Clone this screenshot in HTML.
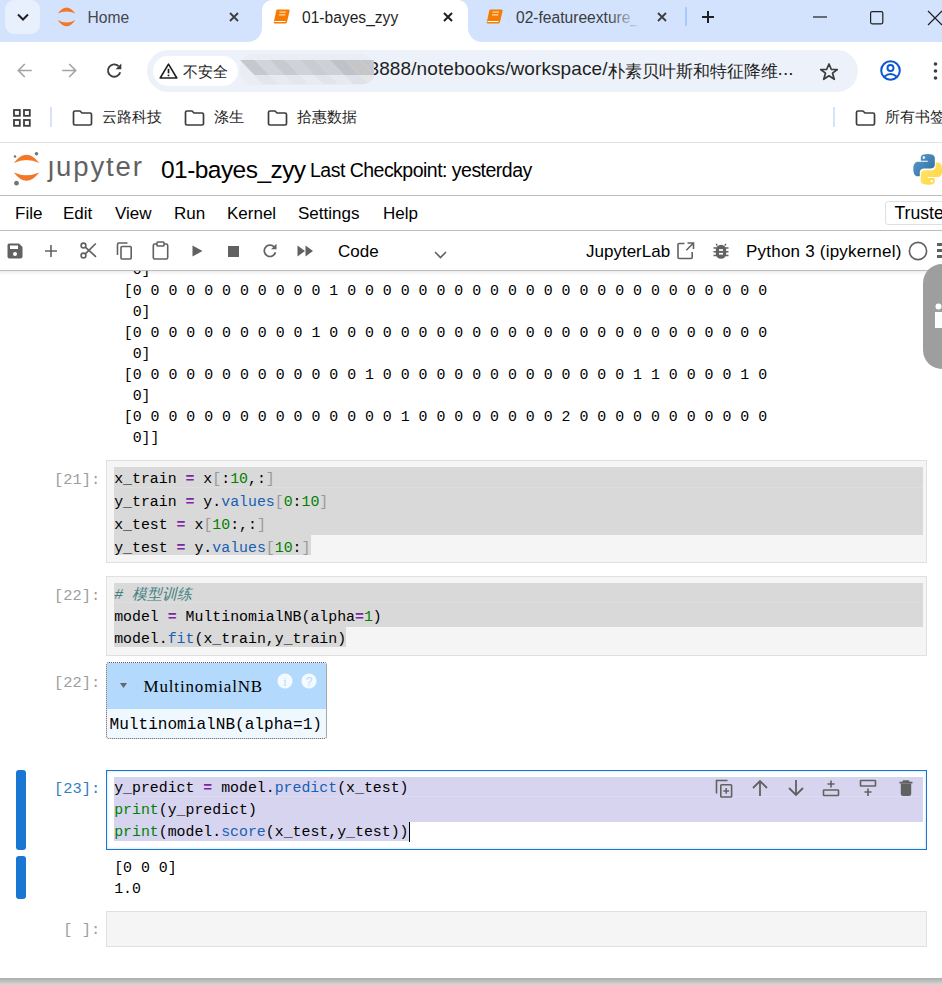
<!DOCTYPE html>
<html><head><meta charset="utf-8">
<style>
*{margin:0;padding:0;box-sizing:border-box}
html,body{width:942px;height:985px;overflow:hidden;background:#fff;font-family:"Liberation Sans",sans-serif;color:#1f1f1f}
.a{position:absolute}
svg{position:absolute;overflow:visible}
#tabs{left:0;top:0;width:942px;height:42px;background:#d3e3fd}
#toolbar{left:0;top:42px;width:942px;height:58px;background:#fff}
#bm{left:0;top:100px;width:942px;height:42px;background:#fff}
.hl{height:1px;left:0;width:942px;background:#bcbcbc}
.mono{font-family:"Liberation Mono",monospace}
.ctab{font-size:15.6px;color:#1f1f1f;white-space:nowrap}
.bmt{font-size:15px;color:#1f1f1f;white-space:nowrap}
.menu{font-size:17px;color:#000;white-space:nowrap;top:204px}
.out{font-family:"Liberation Mono",monospace;font-size:14.9px;line-height:21.16px;white-space:pre;color:#000}
.cell{border:1px solid #e0e0e0;background:#f5f5f5}
.code{font-family:"Liberation Mono",monospace;font-size:14.87px;line-height:21.3px;white-space:pre;color:#000}
.sel{background:#d9d9d9}
.prompt{font-family:"Liberation Mono",monospace;font-size:15.4px;text-align:right;width:46.5px;color:#9e9e9e;white-space:pre}
.kw{color:#7928a1}
.op{color:#7928a1;font-weight:bold}
.num{color:#008000}
.br{color:#999}
.pr{color:#1760b3}
.bi{color:#008000}
.cm{color:#408080;font-style:italic}
</style></head><body>

<!-- TAB STRIP -->
<div id="tabs" class="a"></div>
<div class="a" style="left:5px;top:0;width:35px;height:34px;border-radius:9px;background:#e8effd"></div>
<svg style="left:17px;top:13px" width="12" height="8"><path d="M1 1.5 L6 6.5 L11 1.5" stroke="#1f1f1f" stroke-width="2" fill="none"/></svg>
<!-- home jupyter icon -->
<svg style="left:56px;top:6px" width="21" height="21" viewBox="0 0 21 21"><path d="M1.7 7.6 Q10.5 -4.5 19.4 7.6 Q10.5 3.4 1.7 7.6Z" fill="#f37726"/><path d="M1.7 14 Q10.5 26.6 19.4 14 Q10.5 19 1.7 14Z" fill="#f37726"/></svg>
<div class="a ctab" style="left:87.5px;top:8.5px;color:#474747">Home</div>
<svg style="left:229px;top:12px" width="10" height="10"><path d="M1 1L9 9M9 1L1 9" stroke="#3c3c3c" stroke-width="1.8"/></svg>
<!-- active tab -->
<div class="a" style="left:262px;top:0;width:206px;height:42px;background:#fff;border-radius:10px 10px 0 0"></div>
<svg style="left:248px;top:28px" width="14" height="14"><path d="M0 14 A14 14 0 0 0 14 0 L14 14Z" fill="#fff"/></svg>
<svg style="left:468px;top:28px" width="14" height="14"><path d="M14 14 A14 14 0 0 1 0 0 L0 14Z" fill="#fff"/></svg>
<svg style="left:273px;top:9px" width="18" height="16" viewBox="0 0 18 16"><path d="M4 0.5 H15.5 Q17 0.5 16.6 2 L14 13 Q13.6 14.5 12 14.5 H2 Q0.4 14.5 0.8 13 L3.2 2 Q3.5 0.5 4 0.5Z" fill="#f57c00"/><path d="M6.5 3.2H13M6 5.8H12.3" stroke="#ffd9b0" stroke-width="1.3"/><path d="M1.5 12.5H12.5" stroke="#fff" stroke-width="1"/></svg>
<div class="a ctab" style="left:302px;top:8.5px">01-bayes_zyy</div>
<svg style="left:443px;top:12px" width="10" height="10"><path d="M1 1L9 9M9 1L1 9" stroke="#1f1f1f" stroke-width="2"/></svg>
<!-- tab 3 -->
<svg style="left:486px;top:9px" width="18" height="16" viewBox="0 0 18 16"><path d="M4 0.5 H15.5 Q17 0.5 16.6 2 L14 13 Q13.6 14.5 12 14.5 H2 Q0.4 14.5 0.8 13 L3.2 2 Q3.5 0.5 4 0.5Z" fill="#f57c00"/><path d="M6.5 3.2H13M6 5.8H12.3" stroke="#ffd9b0" stroke-width="1.3"/><path d="M1.5 12.5H12.5" stroke="#fff" stroke-width="1"/></svg>
<div class="a ctab" style="left:516px;top:8.5px;color:#3c3c3c;width:122px;overflow:hidden">02-featureexture_</div>
<div class="a" style="left:608px;top:0;width:32px;height:40px;background:linear-gradient(90deg,rgba(211,227,253,0),#d3e3fd)"></div>
<svg style="left:657px;top:12px" width="10" height="10"><path d="M1 1L9 9M9 1L1 9" stroke="#3c3c3c" stroke-width="1.8"/></svg>
<div class="a" style="left:685px;top:7px;width:2px;height:19px;background:#a8c7fa;border-radius:1px"></div>
<svg style="left:702px;top:11px" width="12" height="12"><path d="M6 0V12M0 6H12" stroke="#1f1f1f" stroke-width="2"/></svg>
<!-- window controls -->
<svg style="left:813px;top:16px" width="14" height="2"><path d="M0 1H14" stroke="#1f1f1f" stroke-width="1.2"/></svg>
<svg style="left:870px;top:11px" width="14" height="14"><rect x="0.6" y="0.6" width="12.2" height="12.2" rx="1.5" stroke="#1f1f1f" stroke-width="1.2" fill="none"/></svg>
<svg style="left:928px;top:11px" width="14" height="14"><path d="M0 0L14 14M14 0L0 14" stroke="#1f1f1f" stroke-width="1.2"/></svg>

<!-- TOOLBAR -->
<svg style="left:17px;top:63px" width="15" height="15" viewBox="0 0 15 15"><path d="M14.8 7.5H1.5M7.8 1L1.3 7.5L7.8 14" stroke="#a3a3a3" stroke-width="1.6" fill="none"/></svg>
<svg style="left:62px;top:63px" width="15" height="15" viewBox="0 0 15 15"><path d="M0.2 7.5H13.5M7.2 1L13.7 7.5L7.2 14" stroke="#a3a3a3" stroke-width="1.6" fill="none"/></svg>
<svg style="left:106px;top:62px" width="17" height="17" viewBox="0 0 17 17"><path d="M14.2 10.2A6.2 6.2 0 1 1 12.6 4.2" stroke="#3c3c3c" stroke-width="1.9" fill="none"/><path d="M15.3 1.5V7.2H9.6Z" fill="#3c3c3c"/></svg>
<div class="a" style="left:147px;top:50px;width:711px;height:42px;border-radius:21px;background:#edf2fa"></div>
<div class="a" style="left:153px;top:56px;width:85px;height:30px;border-radius:15px;background:#fff"></div>
<svg style="left:159px;top:63px" width="19" height="16" viewBox="0 0 19 16"><path d="M9.5 1.2L17.8 15H1.2Z" stroke="#1f1f1f" stroke-width="1.6" fill="none" stroke-linejoin="round"/><path d="M9.5 5.8V10.3" stroke="#1f1f1f" stroke-width="1.7"/><circle cx="9.5" cy="12.4" r="0.95" fill="#1f1f1f"/></svg>
<div class="a" style="left:183px;top:62.5px;font-size:15px;color:#1f1f1f">不安全</div>

<div class="a" style="left:368.5px;top:57px;font-size:19px;color:#1f1f1f;white-space:nowrap"><span style="letter-spacing:0.1px">3888/notebooks/workspace/</span><span style="font-size:17.45px;position:relative;top:1.5px">朴素贝叶斯和特征降维</span><span>...</span></div>
<div class="a" style="left:240px;top:54px;width:134px;height:31px;border-radius:14px;background:#eaedf3"></div>
<svg style="left:236px;top:50px" width="142" height="40" viewBox="0 0 142 40"><defs><clipPath id="cc"><path d="M3.8 10 H137.9 V25 H18.3Z"/></clipPath><clipPath id="lc"><path d="M18.3 25 H137.9 V27 Q136 34.3 123 34.3 H26 Z"/></clipPath></defs><g clip-path="url(#lc)" style="filter:blur(0.5px)"><path d="M-11.7 25 H3.3000000000000007 L12.8 34.3 H-2.1999999999999993Z" fill="#e2e5ea"/><path d="M3.3000000000000007 25 H18.3 L27.8 34.3 H12.8Z" fill="#e6e8ec"/><path d="M18.3 25 H33.3 L42.8 34.3 H27.8Z" fill="#e2e5eb"/><path d="M33.3 25 H48.3 L57.8 34.3 H42.8Z" fill="#e7eaf0"/><path d="M48.3 25 H63.3 L72.8 34.3 H57.8Z" fill="#e3e6ec"/><path d="M63.3 25 H78.3 L87.8 34.3 H72.8Z" fill="#e8ebf1"/><path d="M78.3 25 H93.3 L102.8 34.3 H87.8Z" fill="#e1e4ea"/><path d="M93.3 25 H108.3 L117.8 34.3 H102.8Z" fill="#e6e9ef"/><path d="M108.3 25 H123.3 L132.8 34.3 H117.8Z" fill="#dee1e7"/><path d="M123.3 25 H138.3 L147.8 34.3 H132.8Z" fill="#e4e6ea"/><path d="M138.3 25 H153.3 L162.8 34.3 H147.8Z" fill="#e2e5ea"/><path d="M153.3 25 H168.3 L177.8 34.3 H162.8Z" fill="#e6e8ec"/></g><g clip-path="url(#cc)"><path d="M-26.2 10 H-11.2 L3.3000000000000007 25 H-11.7Z" fill="#c3c6cb"/><path d="M-11.2 10 H3.8000000000000007 L18.3 25 H3.3000000000000007Z" fill="#c8cacd"/><path d="M3.8 10 H18.8 L33.3 25 H18.3Z" fill="#c5c8ce"/><path d="M18.8 10 H33.8 L48.3 25 H33.3Z" fill="#d1d4da"/><path d="M33.8 10 H48.8 L63.3 25 H48.3Z" fill="#c7cacf"/><path d="M48.8 10 H63.8 L78.3 25 H63.3Z" fill="#cfd2d8"/><path d="M63.8 10 H78.8 L93.3 25 H78.3Z" fill="#c9ccd2"/><path d="M78.8 10 H93.8 L108.3 25 H93.3Z" fill="#cdd0d5"/><path d="M93.8 10 H108.8 L123.3 25 H108.3Z" fill="#bfc2c8"/><path d="M108.8 10 H123.8 L138.3 25 H123.3Z" fill="#c6c6c7"/><path d="M123.8 10 H138.8 L153.3 25 H138.3Z" fill="#c3c6cb"/><path d="M138.8 10 H153.8 L168.3 25 H153.3Z" fill="#c8cacd"/></g></svg>

<svg style="left:818.5px;top:61.5px" width="20" height="20" viewBox="0 0 20 19"><path d="M10 1.5L12.4 7H18.3L13.5 10.7L15.3 16.8L10 13.3L4.7 16.8L6.5 10.7L1.7 7H7.6Z" stroke="#3c3c3c" stroke-width="1.7" fill="none" stroke-linejoin="round"/></svg>
<svg style="left:880px;top:60px" width="21" height="21" viewBox="0 0 21 21"><circle cx="10.5" cy="10.5" r="9.3" stroke="#0b57d0" stroke-width="2" fill="none"/><circle cx="10.5" cy="8" r="3" stroke="#0b57d0" stroke-width="1.9" fill="none"/><path d="M4.5 16.5Q10.5 11.5 16.5 16.5" stroke="#0b57d0" stroke-width="1.9" fill="none"/></svg>
<svg style="left:933px;top:61.5px" width="5" height="18"><circle cx="2.5" cy="2" r="1.8" fill="#3c3c3c"/><circle cx="2.5" cy="9" r="1.8" fill="#3c3c3c"/><circle cx="2.5" cy="16" r="1.8" fill="#3c3c3c"/></svg>

<!-- BOOKMARKS -->
<svg style="left:13px;top:109px" width="18" height="18" viewBox="0 0 18 18"><rect x="1" y="1" width="5.8" height="5.8" stroke="#3c3c3c" stroke-width="1.8" fill="none"/><rect x="11" y="1" width="5.8" height="5.8" stroke="#3c3c3c" stroke-width="1.8" fill="none"/><rect x="1" y="11" width="5.8" height="5.8" stroke="#3c3c3c" stroke-width="1.8" fill="none"/><rect x="11" y="11" width="5.8" height="5.8" stroke="#3c3c3c" stroke-width="1.8" fill="none"/></svg>
<div class="a" style="left:50px;top:107px;width:2px;height:20px;background:#d3e3fd"></div>
<svg style="left:72px;top:110px" width="21" height="16" viewBox="0 0 21 16"><path d="M1.5 2.5Q1.5 1 3 1H8L10 3H18Q19.5 3 19.5 4.5V13.5Q19.5 15 18 15H3Q1.5 15 1.5 13.5Z" stroke="#3c3c3c" stroke-width="1.7" fill="none" stroke-linejoin="round"/></svg>
<div class="a bmt" style="left:102px;top:108px">云路科技</div>
<svg style="left:184px;top:110px" width="21" height="16" viewBox="0 0 21 16"><path d="M1.5 2.5Q1.5 1 3 1H8L10 3H18Q19.5 3 19.5 4.5V13.5Q19.5 15 18 15H3Q1.5 15 1.5 13.5Z" stroke="#3c3c3c" stroke-width="1.7" fill="none" stroke-linejoin="round"/></svg>
<div class="a bmt" style="left:214px;top:108px">涤生</div>
<svg style="left:267px;top:110px" width="21" height="16" viewBox="0 0 21 16"><path d="M1.5 2.5Q1.5 1 3 1H8L10 3H18Q19.5 3 19.5 4.5V13.5Q19.5 15 18 15H3Q1.5 15 1.5 13.5Z" stroke="#3c3c3c" stroke-width="1.7" fill="none" stroke-linejoin="round"/></svg>
<div class="a bmt" style="left:297px;top:108px">拾惠数据</div>
<div class="a" style="left:833px;top:107px;width:2px;height:20px;background:#d3e3fd"></div>
<svg style="left:855px;top:110px" width="21" height="16" viewBox="0 0 21 16"><path d="M1.5 2.5Q1.5 1 3 1H8L10 3H18Q19.5 3 19.5 4.5V13.5Q19.5 15 18 15H3Q1.5 15 1.5 13.5Z" stroke="#3c3c3c" stroke-width="1.7" fill="none" stroke-linejoin="round"/></svg>
<div class="a bmt" style="left:885px;top:108px">所有书签</div>
<div class="a hl" style="top:142px;background:#e0e2e0"></div>

<!-- JUPYTER HEADER -->
<svg style="left:12px;top:151px" width="30" height="36" viewBox="0 0 30 36"><path d="M1.8 12 Q14.5 -4.5 27.2 12 Q14.5 6 1.8 12Z" fill="#f37726"/><path d="M1.8 21.5 Q14.5 38 27.2 21.5 Q14.5 27 1.8 21.5Z" fill="#f37726"/><circle cx="3" cy="5.5" r="1.3" fill="#767677"/><circle cx="24.5" cy="2.8" r="1.8" fill="#767677"/><circle cx="4.5" cy="32.2" r="2.4" fill="#767677"/></svg>
<div class="a" style="left:48px;top:151px;font-size:27.5px;color:#616161;letter-spacing:1.9px;white-space:nowrap">ȷupyter</div>
<div class="a" style="left:161px;top:156px;font-size:24.5px;letter-spacing:-0.55px;color:#000;white-space:nowrap">01-bayes_zyy</div>
<div class="a" style="left:310px;top:159px;font-size:19.5px;letter-spacing:-0.52px;color:#000;white-space:nowrap">Last Checkpoint: yesterday</div>
<svg style="left:912px;top:153px" width="32" height="33" viewBox="0 0 32 32" preserveAspectRatio="none"><path d="M15.6 1C8.3 1 8.8 4.2 8.8 4.2V7.5H15.8V8.5H6C6 8.5 1.3 8 1.3 15.4S5.4 22.5 5.4 22.5H7.8V19.1S7.7 15 11.9 15H18.9S22.8 15.1 22.8 11.2V4.8S23.4 1 15.6 1ZM11.8 3.2A1.25 1.25 0 1 1 11.8 5.7A1.25 1.25 0 1 1 11.8 3.2Z" fill="url(#pyb)"/><path d="M15.9 30.8C23.2 30.8 22.7 27.6 22.7 27.6V24.3H15.7V23.3H25.5S30.2 23.8 30.2 16.4S26.1 9.3 26.1 9.3H23.7V12.7S23.8 16.8 19.6 16.8H12.6S8.7 16.7 8.7 20.6V27S8.1 30.8 15.9 30.8ZM19.7 28.6A1.25 1.25 0 1 1 19.7 26.1A1.25 1.25 0 1 1 19.7 28.6Z" fill="url(#pyy)"/><defs><linearGradient id="pyb" x1="0" y1="0" x2="1" y2="1"><stop offset="0" stop-color="#5a9fd4"/><stop offset="1" stop-color="#306998"/></linearGradient><linearGradient id="pyy" x1="0" y1="0" x2="1" y2="1"><stop offset="0" stop-color="#ffe873"/><stop offset="1" stop-color="#ffd43b"/></linearGradient></defs></svg>
<div class="a hl" style="top:195px"></div>

<!-- MENU BAR -->
<div class="a menu" style="left:15px">File</div>
<div class="a menu" style="left:63px">Edit</div>
<div class="a menu" style="left:115px">View</div>
<div class="a menu" style="left:174px">Run</div>
<div class="a menu" style="left:227px">Kernel</div>
<div class="a menu" style="left:298px">Settings</div>
<div class="a menu" style="left:383px">Help</div>
<div class="a" style="left:885px;top:201px;width:70px;height:24px;border:1px solid #e0e0e0;border-radius:3px;background:#fff"></div>
<div class="a" style="left:894.5px;top:202.5px;font-size:17.6px;color:#000;white-space:nowrap">Trusted</div>
<div class="a hl" style="top:230px"></div>

<!-- NB TOOLBAR -->
<svg style="left:7px;top:243px" width="16" height="16" viewBox="0 0 16 16"><path d="M2 0.5H12L15.5 4V13.5Q15.5 15.5 13.5 15.5H2.5Q0.5 15.5 0.5 13.5V2.5Q0.5 0.5 2 0.5Z" fill="#616161"/><rect x="3" y="2.5" width="8" height="3.5" fill="#fff"/><circle cx="8" cy="11" r="2" fill="#fff"/></svg>
<svg style="left:45px;top:245px" width="12" height="12"><path d="M6 0V12M0 6H12" stroke="#616161" stroke-width="1.6"/></svg>
<svg style="left:80px;top:242px" width="17" height="17" viewBox="0 0 17 17"><circle cx="3.5" cy="3.5" r="2.4" stroke="#616161" stroke-width="1.6" fill="none"/><circle cx="3.5" cy="13.5" r="2.4" stroke="#616161" stroke-width="1.6" fill="none"/><path d="M5.3 5.2L16 14.8M5.3 11.8L15.8 1.5" stroke="#616161" stroke-width="1.7"/></svg>
<svg style="left:116px;top:242px" width="17" height="18" viewBox="0 0 17 18"><path d="M11.5 1H3Q1.5 1 1.5 2.5V13" stroke="#616161" stroke-width="1.6" fill="none"/><rect x="5" y="4.5" width="10.2" height="12.5" rx="1" stroke="#616161" stroke-width="1.6" fill="none"/></svg>
<svg style="left:152px;top:241px" width="17" height="19" viewBox="0 0 17 19"><rect x="1.3" y="3" width="14.4" height="15" rx="1.5" stroke="#616161" stroke-width="1.6" fill="none"/><rect x="5" y="1" width="7" height="4" rx="0.8" stroke="#616161" stroke-width="1.5" fill="#fff"/></svg>
<svg style="left:192px;top:245px" width="11" height="12"><path d="M0.5 0.5L10.5 6L0.5 11.5Z" fill="#616161"/></svg>
<svg style="left:228px;top:246px" width="11" height="11"><rect width="11" height="11" fill="#616161"/></svg>
<svg style="left:262px;top:243px" width="16" height="16" viewBox="0 0 16 16"><path d="M13.5 9.3A5.7 5.7 0 1 1 12 3.7" stroke="#616161" stroke-width="1.7" fill="none"/><path d="M14.5 0.8V6.3H9Z" fill="#616161"/></svg>
<svg style="left:297px;top:245px" width="17" height="12"><path d="M0.5 0.5L8 6L0.5 11.5ZM8.5 0.5L16 6L8.5 11.5Z" fill="#616161"/></svg>
<div class="a" style="left:338px;top:242px;font-size:17px;color:#000;white-space:nowrap">Code</div>
<svg style="left:434px;top:251px" width="13" height="8"><path d="M1 1L6.5 6.5L12 1" stroke="#616161" stroke-width="1.6" fill="none"/></svg>
<div class="a" style="left:586px;top:242px;font-size:17px;color:#000;white-space:nowrap">JupyterLab</div>
<svg style="left:676.5px;top:241.5px" width="18" height="18" viewBox="0 0 18 18"><path d="M7.5 1.5H2.2Q1 1.5 1 2.7V15.3Q1 16.5 2.2 16.5H14Q15.2 16.5 15.2 15.3V10" stroke="#616161" stroke-width="1.6" fill="none"/><path d="M10.5 1H16.5V7M16.3 1.2L9.3 8.2" stroke="#616161" stroke-width="1.6" fill="none"/></svg>
<svg style="left:712.5px;top:243px" width="16" height="17" viewBox="0 0 16 17"><path d="M0.5 5H15.5M0.5 8.7H15.5M0.5 12.5H15.5" stroke="#616161" stroke-width="1.4"/><rect x="2.8" y="1.8" width="10.4" height="14" rx="5.2" fill="#616161"/><path d="M4.2 2.6L3.2 0.9M11.8 2.6L12.8 0.9" stroke="#616161" stroke-width="1.4"/><rect x="6" y="6.2" width="4" height="1.7" fill="#fff"/><rect x="6" y="9.9" width="4" height="1.7" fill="#fff"/></svg>
<div class="a" style="left:746px;top:242px;font-size:17px;letter-spacing:0.22px;color:#000;white-space:nowrap">Python 3 (ipykernel)</div>
<svg style="left:908px;top:241px" width="20" height="20"><circle cx="10" cy="10" r="8.6" stroke="#616161" stroke-width="1.6" fill="none"/></svg>
<svg style="left:937px;top:243px" width="6" height="16"><rect x="0" y="0" width="6" height="3" fill="#616161"/><rect x="0" y="6" width="6" height="3" fill="#616161"/><rect x="0" y="12" width="6" height="3" fill="#616161"/></svg>
<div class="a hl" style="top:270px"></div><div class="a" style="left:0;top:271px;width:942px;height:4px;background:linear-gradient(rgba(0,0,0,0.07),rgba(0,0,0,0))"></div>

<!-- NOTEBOOK -->
<div class="a" style="left:0;top:271px;width:942px;height:707px;overflow:hidden">
 <div class="a out" style="left:114.8px;top:-11.5px;line-height:21.09px">  0]
 [0 0 0 0 0 0 0 0 0 0 0 1 0 0 0 0 0 0 0 0 0 0 0 0 0 0 0 0 0 0 0 0 0 0 0 0
  0]
 [0 0 0 0 0 0 0 0 0 0 1 0 0 0 0 0 0 0 0 0 0 0 0 0 0 0 0 0 0 0 0 0 0 0 0 0
  0]
 [0 0 0 0 0 0 0 0 0 0 0 0 0 1 0 0 0 0 0 0 0 0 0 0 0 0 0 0 1 1 0 0 0 0 1 0
  0]
 [0 0 0 0 0 0 0 0 0 0 0 0 0 0 0 1 0 0 0 0 0 0 0 0 2 0 0 0 0 0 0 0 0 0 0 0
  0]]</div>
</div>
<!-- cell 21 -->
<div class="a prompt" style="left:53.7px;top:471px">[21]:</div>
<div class="a cell" style="left:106px;top:460px;width:821px;height:103px"></div>
<div class="a sel" style="left:114px;top:467px;width:809px;height:68px"></div><div class="a" style="left:114px;top:486.5px;width:809px;height:1px;background:#dedede"></div>
<div class="a sel" style="left:114px;top:535px;width:196.5px;height:19.5px"></div>
<div class="a code" style="left:114.2px;top:467.6px;line-height:23px">x_train <span class="op">=</span> x<span class="br">[</span>:<span class="num">10</span>,:<span class="br">]</span>
y_train <span class="op">=</span> y.<span class="pr">values</span><span class="br">[</span><span class="num">0</span>:<span class="num">10</span><span class="br">]</span>
x_test <span class="op">=</span> x<span class="br">[</span><span class="num">10</span>:,:<span class="br">]</span>
y_test <span class="op">=</span> y.<span class="pr">values</span><span class="br">[</span><span class="num">10</span>:<span class="br">]</span></div>

<!-- cell 22 -->
<div class="a prompt" style="left:53.7px;top:587px">[22]:</div>
<div class="a cell" style="left:106px;top:576px;width:821px;height:80px"></div>
<div class="a sel" style="left:114px;top:583px;width:809px;height:44px"></div><div class="a" style="left:114px;top:602px;width:809px;height:1px;background:#dedede"></div>
<div class="a sel" style="left:114px;top:627px;width:232px;height:19.5px"></div>
<div class="a code" style="left:114.2px;top:583.6px;line-height:22.2px"><span class="cm"># 模型训练</span>
model <span class="op">=</span> MultinomialNB(alpha<span class="op">=</span><span class="num">1</span>)
model.<span class="pr">fit</span>(x_train,y_train)</div>

<!-- widget output -->
<div class="a prompt" style="left:53.7px;top:674px">[22]:</div>
<div class="a" style="left:106px;top:662px;width:221px;height:77px;border:1px dotted #5a5a5a;border-radius:3px;background:#f0f8ff;overflow:hidden">
  <div class="a" style="left:0;top:0;width:221px;height:46px;background:#b3dafd"></div>
</div>
<svg style="left:120px;top:683px" width="7" height="5"><path d="M0 0H7L3.5 5Z" fill="#666"/></svg>
<div class="a" style="left:143.5px;top:677px;font-size:17px;font-family:'Liberation Serif',serif;letter-spacing:0.84px;color:#000;white-space:pre">MultinomialNB</div>
<svg style="left:277px;top:673px" width="16" height="16"><circle cx="8" cy="8" r="7.6" fill="#fff" opacity="0.85"/><text x="8" y="12.5" font-size="12" text-anchor="middle" fill="#b3dafd" font-family="Liberation Serif">i</text></svg>
<svg style="left:301px;top:673px" width="16" height="16"><circle cx="8" cy="8" r="7.6" fill="#fff" opacity="0.85"/><text x="8" y="12.5" font-size="12" text-anchor="middle" fill="#b3dafd" font-family="Liberation Sans">?</text></svg>
<div class="a mono" style="left:109.5px;top:715.5px;font-size:16.1px;color:#000;white-space:pre">MultinomialNB(alpha=1)</div>

<!-- cell 23 -->
<div class="a" style="left:16px;top:770px;width:10px;height:80px;border-radius:3px;background:#1976d2"></div>
<div class="a" style="left:16px;top:856px;width:10px;height:43px;border-radius:3px;background:#1976d2"></div>
<div class="a prompt" style="left:53.7px;top:780px;color:#307fc1">[23]:</div>
<div class="a" style="left:106px;top:770px;width:821px;height:80px;border:1px solid #1976d2;background:#fff;box-shadow:inset 0 0 3px rgba(25,118,210,0.28)"></div>
<div class="a" style="left:114px;top:777px;width:809px;height:45px;background:#d7d4f0"></div><div class="a" style="left:114px;top:796px;width:809px;height:1px;background:#dcd9f2"></div>
<div class="a" style="left:114px;top:821px;width:294.5px;height:20px;background:#d7d4f0"></div>
<div class="a" style="left:408.5px;top:822px;width:1px;height:20px;background:#000"></div>
<div class="a code" style="left:114.2px;top:776.65px;line-height:22.2px">y_predict <span class="op">=</span> model.<span class="pr">predict</span>(x_test)
<span class="bi">print</span>(y_predict)
<span class="bi">print</span>(model.<span class="pr">score</span>(x_test,y_test))</div>
<svg style="left:715px;top:778.5px" width="18" height="19" viewBox="0 0 18 19"><path d="M1.5 14.5V1.5H12.5" stroke="#616161" stroke-width="1.6" fill="none"/><rect x="5.8" y="5.8" width="10.8" height="12.2" rx="0.8" stroke="#616161" stroke-width="1.6" fill="none"/><path d="M11.2 9V14.8M8.3 11.9H14.1" stroke="#616161" stroke-width="1.5"/></svg>
<svg style="left:751px;top:779px" width="18" height="18" viewBox="0 0 18 18"><path d="M9 17V2M2 9L9 2L16 9" stroke="#616161" stroke-width="1.8" fill="none"/></svg>
<svg style="left:787px;top:779px" width="18" height="18" viewBox="0 0 18 18"><path d="M9 1V16M2 9L9 16L16 9" stroke="#616161" stroke-width="1.8" fill="none"/></svg>
<svg style="left:822px;top:779px" width="18" height="18" viewBox="0 0 18 18"><rect x="1.5" y="11" width="15" height="5.5" rx="0.5" stroke="#616161" stroke-width="1.6" fill="none"/><path d="M9 1.5V8.5M5.5 5H12.5" stroke="#616161" stroke-width="1.6"/></svg>
<svg style="left:859px;top:779px" width="18" height="18" viewBox="0 0 18 18"><rect x="1.5" y="1.5" width="15" height="5.5" rx="0.5" stroke="#616161" stroke-width="1.6" fill="none"/><path d="M9 9.5V17M5.5 13H12.5" stroke="#616161" stroke-width="1.6"/></svg>
<svg style="left:898.5px;top:780px" width="14" height="17" viewBox="0 0 14 17"><path d="M0.5 2.6H13.5" stroke="#616161" stroke-width="1.8"/><path d="M4.5 1.2H9.5" stroke="#616161" stroke-width="1.8" stroke-linecap="round"/><path d="M1.8 3.5H12.2V13.5Q12.2 16 9.7 16H4.3Q1.8 16 1.8 13.5Z" fill="#616161"/></svg>

<div class="a out" style="left:114.2px;top:858.3px">[0 0 0]
1.0</div>

<!-- empty cell -->
<div class="a prompt" style="left:53.7px;top:921px">[ ]:</div>
<div class="a cell" style="left:106px;top:911px;width:821px;height:36px"></div>

<!-- right floating tab -->
<div class="a" style="left:923px;top:264px;width:40px;height:105px;border-radius:19px;background:#9e9e9e"></div>
<svg style="left:933px;top:303px" width="10" height="26"><circle cx="5.5" cy="3.5" r="3" fill="#fff"/><rect x="2" y="9" width="10" height="16" fill="#fff"/></svg>

<!-- bottom shadow -->
<div class="a" style="left:0;top:978px;width:942px;height:7px;background:linear-gradient(#acacac,#d8d8d8)"></div>

</body></html>
